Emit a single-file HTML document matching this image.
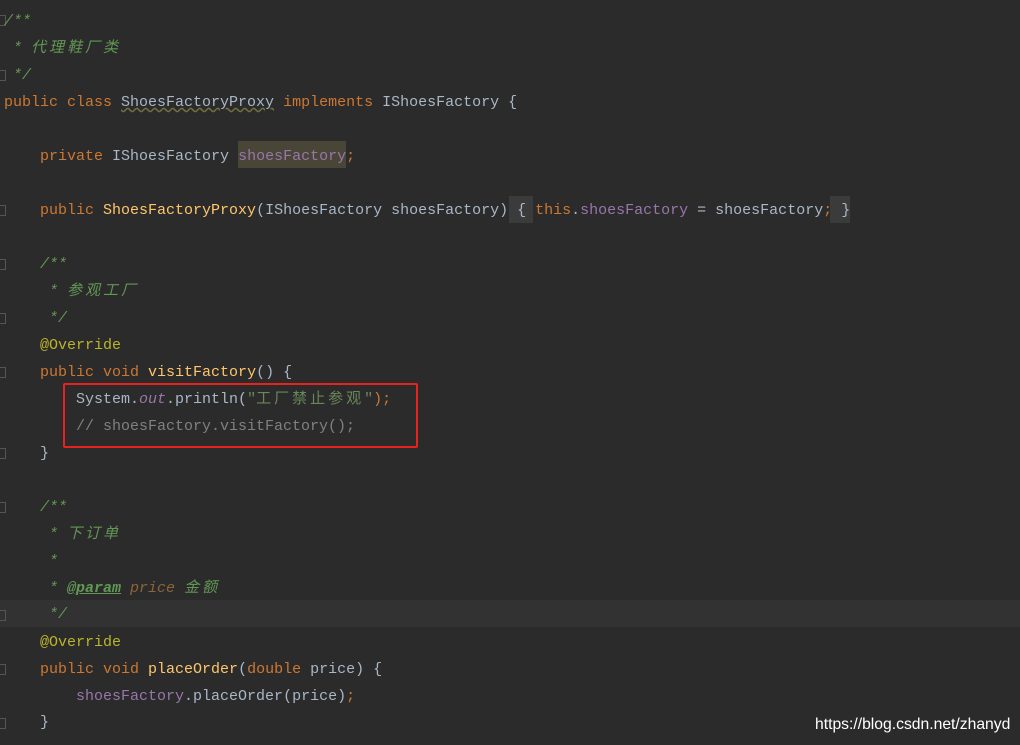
<!DOCTYPE html>
<html><head><meta charset="utf-8"><style>
body{margin:0;width:1020px;height:745px;background:#2b2b2b;overflow:hidden;position:relative;font-family:"Liberation Mono","Noto Sans CJK SC",monospace;font-size:15px;color:#a9b7c6}
.l{position:absolute;left:4px;height:27px;line-height:29px;white-space:pre}
.k{color:#cc7832}.c{color:#629755;font-style:italic}.f{color:#9876aa}.m{color:#ffc66d}.a{color:#bbb529}.s{color:#6a8759}.g{color:#808080}
.cj{letter-spacing:3px}
.hl{position:absolute;background:#3b3b3b}
.fd{position:absolute;left:0;width:5px;height:9px;border:1px solid #555;border-left:none}
</style></head><body>
<div style="position:absolute;left:0;top:600px;width:1020px;height:27px;background:#323232"></div>
<div class="hl" style="left:238px;top:141px;width:108px;height:27px;background:#4a4637"></div>
<div class="hl" style="left:509px;top:196px;width:24px;height:27px"></div>
<div class="hl" style="left:830px;top:196px;width:20px;height:27px"></div>
<div class="fd" style="top:15px"></div><div class="fd" style="top:70px"></div>
<div class="fd" style="top:205px"></div><div class="fd" style="top:259px"></div>
<div class="fd" style="top:313px"></div><div class="fd" style="top:367px"></div>
<div class="fd" style="top:448px"></div><div class="fd" style="top:502px"></div>
<div class="fd" style="top:610px"></div><div class="fd" style="top:664px"></div>
<div class="fd" style="top:718px"></div>
<div class="l" style="top:7px"><span class="c">/**</span></div>
<div class="l" style="top:34px"><span class="c"> * <span class="cj">代理鞋厂类</span></span></div>
<div class="l" style="top:61px"><span class="c"> */</span></div>
<div class="l" style="top:88px"><span class="k">public class </span><span style="text-decoration:underline wavy #707040">ShoesFactoryProxy</span><span class="k"> implements </span>IShoesFactory {</div>
<div class="l" style="top:142px">    <span class="k">private </span>IShoesFactory <span class="f">shoesFactory</span><span class="k">;</span></div>
<div class="l" style="top:196px">    <span class="k">public </span><span class="m">ShoesFactoryProxy</span>(IShoesFactory shoesFactory) { <span class="k">this</span>.<span class="f">shoesFactory</span> = shoesFactory<span class="k">;</span> }</div>
<div class="l" style="top:250px"><span class="c">    /**</span></div>
<div class="l" style="top:277px"><span class="c">     * <span class="cj">参观工厂</span></span></div>
<div class="l" style="top:304px"><span class="c">     */</span></div>
<div class="l" style="top:331px">    <span class="a">@Override</span></div>
<div class="l" style="top:358px">    <span class="k">public void </span><span class="m">visitFactory</span>() {</div>
<div class="l" style="top:385px">        System.<span class="f" style="font-style:italic">out</span>.println(<span class="s">"<span class="cj">工厂禁止参观</span>"</span><span class="k">);</span></div>
<div class="l" style="top:412px"><span class="g">        // shoesFactory.visitFactory();</span></div>
<div class="l" style="top:439px">    }</div>
<div class="l" style="top:493px"><span class="c">    /**</span></div>
<div class="l" style="top:520px"><span class="c">     * <span class="cj">下订单</span></span></div>
<div class="l" style="top:547px"><span class="c">     *</span></div>
<div class="l" style="top:574px"><span class="c">     * <b style="text-decoration:underline">@param</b> <span style="color:#8a653b">price</span> <span class="cj">金额</span></span></div>
<div class="l" style="top:600px"><span class="c">     */</span></div>
<div class="l" style="top:628px">    <span class="a">@Override</span></div>
<div class="l" style="top:655px">    <span class="k">public void </span><span class="m">placeOrder</span>(<span class="k">double </span>price) {</div>
<div class="l" style="top:682px">        <span class="f">shoesFactory</span>.placeOrder(price)<span class="k">;</span></div>
<div class="l" style="top:708px">    }</div>
<div style="position:absolute;left:63px;top:383px;width:351px;height:61px;border:2px solid #e8231f;border-radius:2px"></div>
<div style="position:absolute;left:815px;top:716px;font-family:'Liberation Sans',sans-serif;font-size:15.7px;color:#fff">https://blog.csdn.net/zhanyd</div>
</body></html>
